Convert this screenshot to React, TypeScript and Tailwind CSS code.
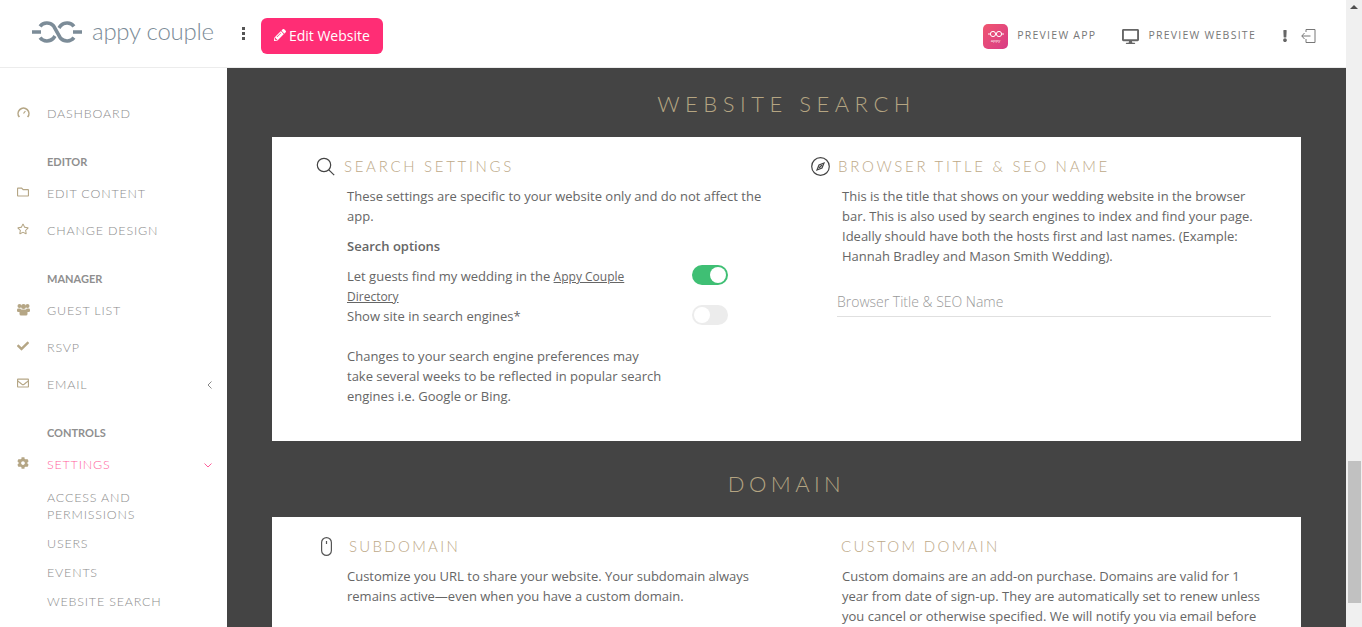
import { FaCheck, FaCog, FaDesktop, FaExclamation, FaPencilAlt, FaRegEnvelope, FaRegFolder, FaRegStar } from "react-icons/fa";

const body = "text-[13px] leading-5 text-[#666] [font-family:'Open_Sans',sans-serif]";
const title = "text-[15px] leading-5 font-light text-[#bda988] [font-family:Lato,sans-serif]";
const section = "text-center text-[22px] leading-[30px] text-[#b5a582] [font-family:Lato,sans-serif] font-light";
const navText = "text-[12.5px] font-light tracking-[0.065em] [font-family:Lato,sans-serif]";
const navHead = "h-5 pl-[47px] text-[11px] leading-5 font-bold text-[#8f8f8f] [font-family:Lato,sans-serif]";
const navSub = `pl-[47px] text-[#8c8c8c] ${navText}`;

function Logo() {
  return (
    <svg width="50" height="22" viewBox="0 0 50 22" fill="none" stroke="#7c8c98" strokeWidth="3.600">
      <path d="M0 11h9M41 11h9" />
      <path d="M8 5.300A9 9 0 0 1 21.400 4.700L28.600 17.300A9 9 0 0 0 42 16.700" />
      <path d="M8 16.700A9 9 0 0 0 21.400 17.300L23 15M27 7l1.600-2.300A9 9 0 0 1 42 5.300" />
    </svg>
  );
}

function Gauge() {
  return (
    <svg width="13" height="13" viewBox="0 0 13 13" fill="none" stroke="#b5a685" strokeWidth="1.6">
      <path d="M2.400 11a5.400 5.400 0 1 1 8.200 0" />
      <path d="M6.500 7.500 8.400 5" strokeWidth="1.2" />
    </svg>
  );
}

function Guests() {
  return (
    <svg width="13" height="13" viewBox="0 0 13 13" fill="#b5a685">
      <circle cx="2.500" cy="3" r="2" /><circle cx="10.500" cy="3" r="2" /><circle cx="6.500" cy="3.500" r="2.500" />
      <rect x="0" y="5.500" width="4" height="3.500" rx="1.200" /><rect x="9" y="5.500" width="4" height="3.500" rx="1.200" />
      <rect x="2.500" y="6.500" width="8" height="6" rx="1.500" />
    </svg>
  );
}

function NavRow({ icon, label, className, active, chevron }: { icon: React.ReactNode; label: string; className: string; active?: boolean; chevron?: React.ReactNode }) {
  return (
    <div className={`flex h-5 items-center ${className}`}>
      <span className="flex w-[47px] shrink-0 justify-start pl-[17px] text-[12px] text-[#b5a685] -translate-y-0.5">{icon}</span>
      <span className={`${navText} ${active ? "text-[#ff5f9b]" : "text-[#8c8c8c]"}`}>{label}</span>
      <span className="ml-auto pr-[15px]">{chevron}</span>
    </div>
  );
}

function Toggle({ on }: { on?: boolean }) {
  return (
    <span className={`flex h-5 w-9 shrink-0 -translate-y-px rounded-full p-0.5 ${on ? "justify-end bg-[#3fbf74]" : "justify-start bg-[#ececec]"}`}>
      <span className="h-4 w-4 rounded-full bg-white" />
    </span>
  );
}

function Sidebar() {
  return (
    <aside className="h-[559px] w-[227px] shrink-0 overflow-hidden bg-white pt-9">
      <NavRow className="" icon={<Gauge />} label="DASHBOARD" />
      <div className={`mt-7 ${navHead}`}>EDITOR</div>
      <NavRow className="mt-3" icon={<FaRegFolder />} label="EDIT CONTENT" />
      <NavRow className="mt-[17px]" icon={<FaRegStar />} label="CHANGE DESIGN" />
      <div className={`mt-7 ${navHead}`}>MANAGER</div>
      <NavRow className="mt-3" icon={<Guests />} label="GUEST LIST" />
      <NavRow className="mt-[17px]" icon={<FaCheck />} label="RSVP" />
      <NavRow
        className="mt-[17px]"
        icon={<FaRegEnvelope />}
        label="EMAIL"
        chevron={<svg width="5" height="8" viewBox="0 0 5 8" fill="none" stroke="#888"><path d="M4.500.5 1 4l3.500 3.500" /></svg>}
      />
      <div className={`mt-7 ${navHead}`}>CONTROLS</div>
      <NavRow
        className="mt-3"
        icon={<FaCog />}
        label="SETTINGS"
        active
        chevron={<svg width="8" height="5" viewBox="0 0 8 5" fill="none" stroke="#ff5f9b"><path d="M.5.500 4 4 7.500.5" /></svg>}
      />
      <div className={`mt-[14px] w-[150px] leading-[17px] ${navSub}`}>ACCESS AND PERMISSIONS</div>
      <div className={`mt-[11px] leading-5 ${navSub}`}>USERS</div>
      <div className={`mt-[9px] leading-5 ${navSub}`}>EVENTS</div>
      <div className={`mt-[9px] leading-5 ${navSub}`}>WEBSITE SEARCH</div>
      <div className={`mt-[9px] leading-5 ${navSub}`}>DOMAIN</div>
    </aside>
  );
}

function Header() {
  return (
    <header className="flex h-[68px] shrink-0 items-center border-b border-[#ececec] bg-white pt-[5px]">
      <div className="ml-8 -translate-y-1"><Logo /></div>
      <span className="ml-[10px] -translate-y-[5px] text-[24px] font-light tracking-[-0.01em] text-[#7c8c98] [font-family:Lato,sans-serif]">appy couple</span>
      <span className="ml-7 flex -translate-y-[3px] flex-col gap-0.5">
        <i className="block h-[3px] w-[3px] bg-[#555]" />
        <i className="block h-[3px] w-[3px] bg-[#555]" />
        <i className="block h-[3px] w-[3px] bg-[#555]" />
      </span>
      <button className="ml-4 flex h-9 w-[122px] items-center justify-center gap-[3px] rounded-md bg-[#ff2d75] pb-0.5 text-[14px] text-white [font-family:'Open_Sans',sans-serif]">
        <FaPencilAlt className="text-[12px]" /> Edit Website
      </button>
      <span className="ml-auto flex h-[25px] w-[25px] flex-col items-center justify-center rounded-[5px] bg-gradient-to-br from-[#f0556f] to-[#d83a86]">
        <svg width="16" height="8" viewBox="0 0 16 8" fill="none" stroke="#fff" strokeWidth="1"><circle cx="5" cy="4" r="2.600" /><circle cx="11" cy="4" r="2.600" /><path d="M0 4h2.400M13.600 4H16" /></svg>
        <span className="text-[4px] leading-[5px] text-white">appy</span>
      </span>
      <span className="ml-[9px] text-[10.5px] tracking-[0.12em] text-[#777] [font-family:'Open_Sans',sans-serif]">PREVIEW APP</span>
      <FaDesktop className="ml-[26px] text-[17px] text-[#666]" />
      <span className="ml-[9px] text-[10.5px] tracking-[0.12em] text-[#777] [font-family:'Open_Sans',sans-serif]">PREVIEW WEBSITE</span>
      <FaExclamation className="ml-[23px] text-[12px] text-[#666]" />
      <svg className="ml-[10px] mr-[30px]" width="15" height="14" viewBox="0 0 15 14" fill="none" stroke="#777" strokeWidth="1">
        <path d="M5 3V.5h9v13H5V10M.8 7H9.500M3.500 4 .8 7l2.700 3" />
      </svg>
    </header>
  );
}

function SearchCard() {
  return (
    <div className="mx-[45px] flex h-[304px] bg-white pt-[19px]">
      <div className="w-[535px] shrink-0 pl-[44px]">
        <div className="flex items-center gap-[9px]">
          <svg width="19" height="19" viewBox="0 0 19 19" fill="none" stroke="#444" strokeWidth="1.2">
            <circle cx="8" cy="8" r="6.700" /><path d="m12.800 12.800 5.400 5.400" />
          </svg>
          <span className={`${title} tracking-[2.7px]`}>SEARCH SETTINGS</span>
        </div>
        <div className={`mt-2.5 ml-[31px] w-[425px] ${body}`}>
          <p>These settings are specific to your website only and do not affect the app.</p>
          <p className="mt-2.5 font-semibold">Search options</p>
          <div className="mt-2.5 flex w-[381px] justify-between">
            <p className="w-[320px]">Let guests find my wedding in the <a className="text-[12px] leading-none underline">Appy Couple Directory</a></p>
            <Toggle on />
          </div>
          <div className="flex w-[381px] justify-between">
            <p>Show site in search engines*</p>
            <Toggle />
          </div>
          <p className="mt-5 w-[320px]">Changes to your search engine preferences may take several weeks to be reflected in popular search engines i.e. Google or Bing.</p>
        </div>
      </div>
      <div className="min-w-0 flex-1">
        <div className="flex items-center gap-2">
          <svg className="ml-[4px]" width="19" height="19" viewBox="0 0 19 19" fill="none" stroke="#444" strokeWidth="1.2">
            <circle cx="9.500" cy="9.500" r="8.800" />
            <path d="m13 6-2 5-5 2 2-5z" />
            <path d="m8 11 3-3" />
          </svg>
          <span className={`${title} tracking-[2.7px]`}>BROWSER TITLE &amp; SEO NAME</span>
        </div>
        <p className={`mt-2.5 ml-[35px] w-[425px] ${body}`}>This is the title that shows on your wedding website in the browser bar. This is also used by search engines to index and find your page. Ideally should have both the hosts first and last names. (Example: Hannah Bradley and Mason Smith Wedding).</p>
        <div className="mt-[26px] mx-[30px] border-b border-[#e0e0e0] pb-1 text-[14px] leading-5 font-light text-[#999] [font-family:'Open_Sans',sans-serif]">Browser Title &amp; SEO Name</div>
      </div>
    </div>
  );
}

function DomainCard() {
  return (
    <div className="mx-[45px] flex h-[200px] bg-white pt-[19px]">
      <div className="w-[535px] shrink-0 pl-[44px]">
        <div className="flex items-center">
          <svg className="ml-[5px]" width="11" height="19" viewBox="0 0 11 19" fill="none" stroke="#555" strokeWidth="1.2">
            <rect x="0.600" y="0.600" width="9.800" height="17.800" rx="4.900" /><path d="M5.500 4v3" />
          </svg>
          <span className={`ml-[17px] ${title} tracking-[2.3px]`}>SUBDOMAIN</span>
        </div>
        <p className={`mt-2.5 ml-[31px] w-[425px] ${body}`}>Customize you URL to share your website. Your subdomain always remains active—even when you have a custom domain.</p>
      </div>
      <div className="min-w-0 flex-1">
        <div className={`ml-[34px] ${title} tracking-[2.3px]`}>CUSTOM DOMAIN</div>
        <p className={`mt-2.5 ml-[35px] w-[425px] ${body}`}>Custom domains are an add-on purchase. Domains are valid for 1 year from date of sign-up. They are automatically set to renew unless you cancel or otherwise specified. We will notify you via email before they renew.</p>
      </div>
    </div>
  );
}

function Scrollbar() {
  return (
    <div className="flex h-full w-4 shrink-0 flex-col items-center bg-[#f0f0f0]">
      <span className="mt-[5px] h-0 w-0 border-x-[4px] border-b-[4px] border-x-transparent border-b-[#505050]" />
      <span className="mt-[452px] ml-px h-[142px] w-[13px] bg-[#c1c1c1]" />
    </div>
  );
}

export default function App() {
  return (
    <div className="flex h-[627px] w-[1362px] overflow-hidden bg-white">
      <div className="flex w-[1346px] shrink-0 flex-col">
        <Header />
        <div className="flex min-h-0 flex-1">
          <Sidebar />
          <main className="min-w-0 flex-1 overflow-hidden bg-[#444] pt-[21px]">
            <h2 className={`mb-[18px] tracking-[0.25em] ${section}`}>WEBSITE SEARCH</h2>
            <SearchCard />
            <h2 className={`mt-7 mb-[18px] tracking-[0.2em] ${section}`}>DOMAIN</h2>
            <DomainCard />
          </main>
        </div>
      </div>
      <Scrollbar />
    </div>
  );
}
